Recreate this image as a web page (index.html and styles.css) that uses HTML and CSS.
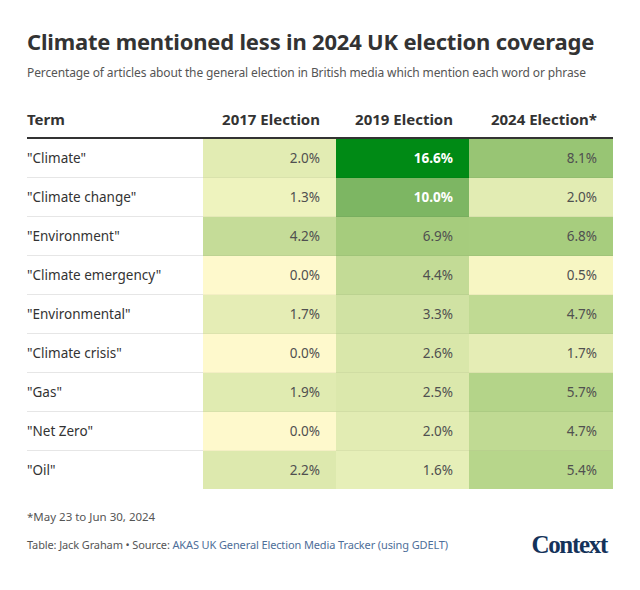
FILE: index.html
```html
<!DOCTYPE html>
<html lang="en">
<head>
<meta charset="utf-8">
<title>Climate mentioned less in 2024 UK election coverage</title>
<link rel="stylesheet" href="styles.css">
</head>
<body>
<div class="chart">
  <h1 class="title">Climate mentioned less in 2024 UK election coverage</h1>
  <p class="subtitle">Percentage of articles about the general election in British media which mention each word or phrase</p>
  <table class="table">
    <colgroup>
      <col class="c-term"><col class="c-num"><col class="c-num"><col class="c-last">
    </colgroup>
    <thead>
      <tr><th class="th-term">Term</th><th>2017 Election</th><th>2019 Election</th><th>2024 Election*</th></tr>
    </thead>
    <tbody>
      <tr><td class="term">"Climate"</td><td class="v20">2.0%</td><td class="v166 strong">16.6%</td><td class="v81">8.1%</td></tr>
      <tr><td class="term">"Climate change"</td><td class="v13">1.3%</td><td class="v100 strong">10.0%</td><td class="v20">2.0%</td></tr>
      <tr><td class="term">"Environment"</td><td class="v42">4.2%</td><td class="v69">6.9%</td><td class="v68">6.8%</td></tr>
      <tr><td class="term">"Climate emergency"</td><td class="v00">0.0%</td><td class="v44">4.4%</td><td class="v05">0.5%</td></tr>
      <tr><td class="term">"Environmental"</td><td class="v17">1.7%</td><td class="v33">3.3%</td><td class="v47">4.7%</td></tr>
      <tr><td class="term">"Climate crisis"</td><td class="v00">0.0%</td><td class="v26">2.6%</td><td class="v17">1.7%</td></tr>
      <tr><td class="term">"Gas"</td><td class="v19">1.9%</td><td class="v25">2.5%</td><td class="v57">5.7%</td></tr>
      <tr><td class="term">"Net Zero"</td><td class="v00">0.0%</td><td class="v20">2.0%</td><td class="v47">4.7%</td></tr>
      <tr><td class="term">"Oil"</td><td class="v22">2.2%</td><td class="v16">1.6%</td><td class="v54">5.4%</td></tr>
    </tbody>
  </table>
  <p class="note">*May 23 to Jun 30, 2024</p>
  <div class="footer">
    <p class="credit">Table: Jack Graham • Source: <a class="src" href="#">AKAS UK General Election Media Tracker (using GDELT)</a></p>
    <div class="logo">Context</div>
  </div>
</div>
</body>
</html>
```
FILE: styles.css
```css
html, body {
  margin: 0;
  padding: 0;
  background: #ffffff;
}
body {
  font-family: "Noto Sans", "Open Sans", sans-serif;
  color: #333333;
}
.chart {
  width: 586px;
  padding: 26px 27px 0 27px;
}
.title {
  margin: 0;
  font-size: 22px;
  line-height: 30px;
  font-weight: 700;
  color: #333333;
  letter-spacing: -0.2px;
}
.subtitle {
  margin: 8px 0 0 0;
  font-size: 12px;
  line-height: 18px;
  color: #555555;
  letter-spacing: -0.12px;
}
.table {
  margin-top: 27px;
  width: 586px;
  border-collapse: collapse;
  table-layout: fixed;
  font-size: 13.5px;
}
.c-term { width: 176px; }
.c-num { width: 133px; }
.c-last { width: 144px; }
.table th {
  text-align: right;
  font-weight: 700;
  font-size: 15px;
  color: #333333;
  padding: 0 16px 8px 0;
  height: 20px;
  border-bottom: 2px solid #333333;
}
.table th.th-term {
  text-align: left;
  padding-left: 0;
}
.table td {
  height: 38px;
  padding: 0 16px 0 0;
  text-align: right;
  color: #505050;
  border-bottom: 1px solid rgba(0, 0, 0, 0.04);
}
.table tbody tr:last-child td {
  border-bottom: none;
}
.table td.term {
  text-align: left;
  color: #333333;
  border-bottom: 1px solid #e6e6e6;
}
.table td.strong {
  color: #ffffff;
  font-weight: 700;
}
.v00 { background: #fef9cc; }
.v05 { background: #f7f6c3; }
.v13 { background: #eef3be; }
.v16 { background: #e6efb8; }
.v17 { background: #e5edb5; }
.v19 { background: #e0ebb1; }
.v20 { background: #e2ecb3; }
.v22 { background: #dde9ae; }
.v25 { background: #dbe8ac; }
.v26 { background: #d9e7aa; }
.v33 { background: #d0e2a3; }
.v42 { background: #c5dc98; }
.v44 { background: #c3db96; }
.v47 { background: #c0da93; }
.v54 { background: #b7d68b; }
.v57 { background: #b4d489; }
.v68 { background: #a7cd7e; }
.v69 { background: #a6cc7d; }
.v81 { background: #98c574; }
.v100 { background: #7db663; }
.v166 { background: #008a15; }
.note {
  margin: 20px 0 0 0;
  font-size: 11.5px;
  line-height: 16px;
  color: #555555;
}
.footer {
  margin-top: 8px;
  display: flex;
  align-items: center;
  justify-content: space-between;
}
.credit {
  margin: 0;
  font-size: 11px;
  line-height: 16px;
  color: #555555;
  letter-spacing: -0.12px;
}
.src {
  color: #4e6e99;
  text-decoration: none;
}
.logo {
  margin-right: 6px;
  font-family: "Liberation Serif", serif;
  font-weight: 700;
  font-size: 25px;
  letter-spacing: -1.3px;
  color: #14325a;
  line-height: 24px;
}
```
